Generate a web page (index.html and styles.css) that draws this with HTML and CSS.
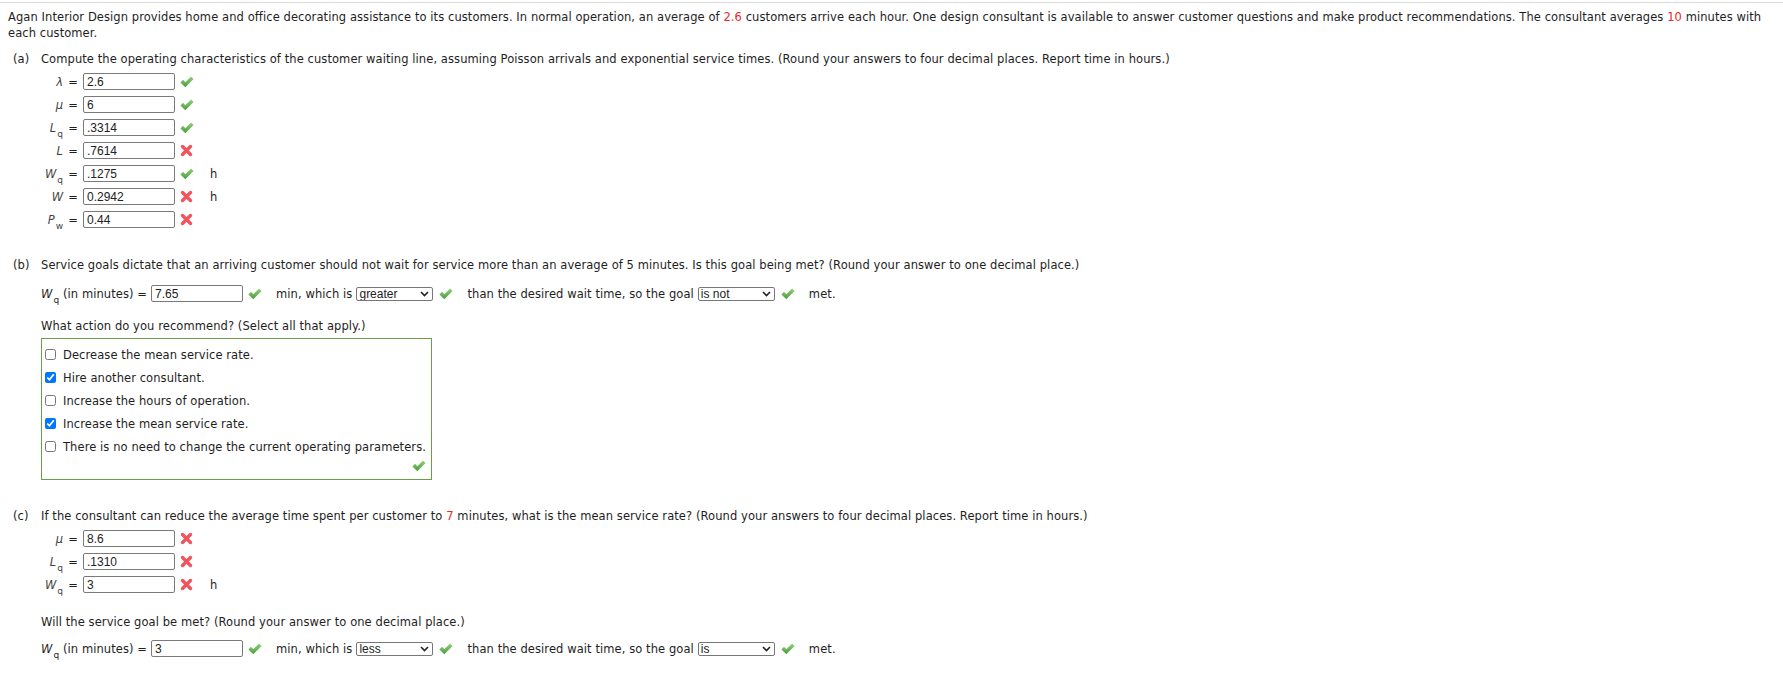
FILE: index.html
```html
<!DOCTYPE html>
<html lang="en">
<head>
    <meta charset="UTF-8">
    <title>Agan Interior Design - Waiting Line</title>
    <link rel="stylesheet" href="styles.css">
</head>
<body>
    <div class="topline"></div>

    <p class="intro">Agan Interior Design provides home and office decorating assistance to its customers. In normal operation, an average of <span class="given">2.6</span> customers arrive each hour. One design consultant is available to answer customer questions and make product recommendations. The consultant averages <span class="given">10</span> minutes with each customer.</p>

    <!-- part (a) -->
    <div class="part part-a">
        <p class="part-head"><span class="part-tag">(a)</span>Compute the operating characteristics of the customer waiting line, assuming Poisson arrivals and exponential service times. (Round your answers to four decimal places. Report time in hours.)</p>

        <div class="row"><span class="var"><i>&lambda;</i></span><span class="eq">=</span><input class="answer" type="text" value="2.6" readonly><span class="ok"></span></div>
        <div class="row"><span class="var"><i>&mu;</i></span><span class="eq">=</span><input class="answer" type="text" value="6" readonly><span class="ok"></span></div>
        <div class="row"><span class="var"><i>L</i><sub>q</sub></span><span class="eq">=</span><input class="answer" type="text" value=".3314" readonly><span class="ok"></span></div>
        <div class="row"><span class="var"><i>L</i></span><span class="eq">=</span><input class="answer" type="text" value=".7614" readonly><span class="bad"></span></div>
        <div class="row"><span class="var"><i>W</i><sub>q</sub></span><span class="eq">=</span><input class="answer" type="text" value=".1275" readonly><span class="ok"></span><span class="unit">h</span></div>
        <div class="row"><span class="var"><i>W</i></span><span class="eq">=</span><input class="answer" type="text" value="0.2942" readonly><span class="bad"></span><span class="unit">h</span></div>
        <div class="row"><span class="var"><i>P</i><sub>w</sub></span><span class="eq">=</span><input class="answer" type="text" value="0.44" readonly><span class="bad"></span></div>
    </div>

    <!-- part (b) -->
    <div class="part part-b">
        <p class="part-head"><span class="part-tag">(b)</span>Service goals dictate that an arriving customer should not wait for service more than an average of 5 minutes. Is this goal being met? (Round your answer to one decimal place.)</p>

        <div class="row inline-row">
            <span class="lead"><i>W</i><sub>q</sub> (in minutes) =</span>
            <input class="answer" type="text" value="7.65" readonly><span class="ok"></span>
            <span class="text">min, which is</span>
            <span class="select"><select><option>greater</option></select></span><span class="ok ok-sel"></span>
            <span class="text">than the desired wait time, so the goal</span>
            <span class="select"><select><option>is not</option></select></span><span class="ok ok-sel"></span>
            <span class="text">met.</span>
        </div>

        <p class="question">What action do you recommend? (Select all that apply.)</p>

        <div class="choices">
            <label class="choice"><input type="checkbox">Decrease the mean service rate.</label>
            <label class="choice"><input type="checkbox" checked>Hire another consultant.</label>
            <label class="choice"><input type="checkbox">Increase the hours of operation.</label>
            <label class="choice"><input type="checkbox" checked>Increase the mean service rate.</label>
            <label class="choice"><input type="checkbox">There is no need to change the current operating parameters.</label>
            <div class="choices-mark"><span class="ok"></span></div>
        </div>
    </div>

    <!-- part (c) -->
    <div class="part part-c">
        <p class="part-head"><span class="part-tag">(c)</span>If the consultant can reduce the average time spent per customer to <span class="given">7</span> minutes, what is the mean service rate? (Round your answers to four decimal places. Report time in hours.)</p>

        <div class="row"><span class="var"><i>&mu;</i></span><span class="eq">=</span><input class="answer" type="text" value="8.6" readonly><span class="bad"></span></div>
        <div class="row"><span class="var"><i>L</i><sub>q</sub></span><span class="eq">=</span><input class="answer" type="text" value=".1310" readonly><span class="bad"></span></div>
        <div class="row"><span class="var"><i>W</i><sub>q</sub></span><span class="eq">=</span><input class="answer" type="text" value="3" readonly><span class="bad"></span><span class="unit">h</span></div>

        <p class="question question-c">Will the service goal be met? (Round your answer to one decimal place.)</p>

        <div class="row inline-row">
            <span class="lead"><i>W</i><sub>q</sub> (in minutes) =</span>
            <input class="answer" type="text" value="3" readonly><span class="ok"></span>
            <span class="text">min, which is</span>
            <span class="select"><select><option>less</option></select></span><span class="ok ok-sel"></span>
            <span class="text">than the desired wait time, so the goal</span>
            <span class="select"><select><option>is</option></select></span><span class="ok ok-sel"></span>
            <span class="text">met.</span>
        </div>
    </div>

    <script>
        // icons are the same everywhere, so stamp them in once
        const checkSvg = '<svg width="14" height="12" viewBox="0 0 14 12"><defs><linearGradient id="g" x1="0" y1="0" x2="0" y2="1"><stop offset="0" stop-color="#93d47f"/><stop offset="1" stop-color="#4a9a3b"/></linearGradient></defs><path d="M0.4 6.4 L3 3.8 L5.3 6.3 L11 0.4 L13.6 3 L5.3 11.3 Z" fill="url(#g)"/></svg>';
        const crossSvg = '<svg width="13" height="13" viewBox="0 0 13 13"><path d="M2.5 2.5 L10.5 10.5 M10.5 2.5 L2.5 10.5" stroke="#f2545b" stroke-width="3.4" stroke-linecap="round"/></svg>';
        const chevSvg = '<svg class="chev" width="9" height="6" viewBox="0 0 9 6"><path d="M1 1 L4.5 4.5 L8 1" fill="none" stroke="#222" stroke-width="1.6"/></svg>';

        document.querySelectorAll('.ok').forEach(el => el.innerHTML = checkSvg);
        document.querySelectorAll('.bad').forEach(el => el.innerHTML = crossSvg);
        document.querySelectorAll('.select').forEach(el => el.insertAdjacentHTML('beforeend', chevSvg));
    </script>
</body>
</html>
```

FILE: styles.css
```css
body {
    margin: 0;
    padding: 0 8px;
    font-family: "DejaVu Sans", Verdana, sans-serif;
    font-size: 11.5px;
    letter-spacing: 0.08px;
    color: #1e1e1e;
    background: #fff;
}

p {
    margin: 0;
}

.topline {
    height: 1px;
    margin: 2px -8px 0;
    background: #dcdcdc;
}

.intro {
    margin-top: 6px;
    line-height: 16px;
}

.given {
    color: #e8262d;
}

.part {
    margin-left: 33px;
}

.part-head {
    line-height: 16px;
}

.part-tag {
    display: inline-block;
    width: 28px;
    margin-left: -28px;
}

.part-a {
    margin-top: 10px;
}

.part-a .part-head,
.part-c .part-head {
    margin-bottom: 3px;
}

.part-b {
    margin-top: 26px;
}

.part-b .part-head {
    margin-bottom: 9px;
}

.part-c {
    margin-top: 28px;
}

.row {
    display: flex;
    align-items: center;
    height: 23px;
}

.var {
    width: 22px;
    text-align: right;
    color: #444;
    white-space: nowrap;
    letter-spacing: 0;
}

sub {
    font-size: 9px;
    vertical-align: -5px;
    line-height: 0;
    margin-left: 1px;
}

.eq {
    width: 20px;
    text-align: center;
}

.answer {
    box-sizing: border-box;
    width: 92px;
    height: 17px;
    padding: 0 3px;
    border: 1px solid #7a7a7a;
    border-radius: 2px;
    font-family: "Liberation Sans", Arial, sans-serif;
    font-size: 12px;
    letter-spacing: 0;
    color: #222;
    background: #fff;
    outline: none;
}

.ok,
.bad {
    display: inline-flex;
    width: 14px;
    margin-left: 5px;
}

.unit {
    margin-left: 16px;
}

.inline-row .lead {
    margin-right: 4px;
    white-space: nowrap;
}

.inline-row .text {
    margin-left: 14px;
    margin-right: 4px;
    white-space: nowrap;
}

.ok-sel {
    margin-left: 6px;
}

.select {
    position: relative;
    display: inline-block;
    width: 77px;
    height: 14px;
}

.select select {
    box-sizing: border-box;
    width: 100%;
    height: 14px;
    padding: 0 0 0 2px;
    border: 1px solid #777;
    border-radius: 2px;
    font-family: "Liberation Sans", Arial, sans-serif;
    font-size: 12px;
    line-height: 12px;
    color: #222;
    background: #fff;
    appearance: none;
    -webkit-appearance: none;
}

.chev {
    position: absolute;
    right: 4px;
    top: 4px;
    pointer-events: none;
}

.question {
    line-height: 16px;
    margin-top: 13px;
}

.question-c {
    margin-top: 18px;
    margin-bottom: 7px;
}

.choices {
    width: fit-content;
    margin-top: 4px;
    padding: 4px 5px 5px 0;
    border: 1px solid #6a9e48;
}

.choice {
    display: flex;
    align-items: center;
    height: 23px;
    white-space: nowrap;
}

.choice input {
    width: 11px;
    height: 11px;
    margin: 0 7px 0 3px;
}

.choices-mark {
    display: flex;
    justify-content: flex-end;
    height: 14px;
    padding-top: 2px;
}
```
